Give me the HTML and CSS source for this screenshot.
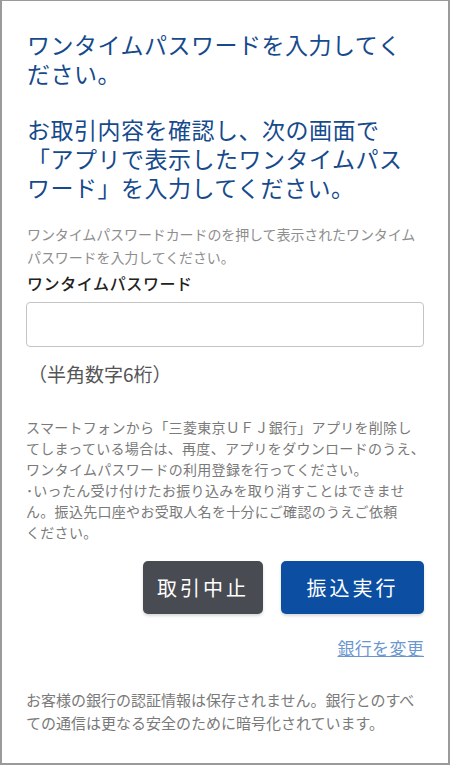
FILE: index.html
```html
<!DOCTYPE html>
<html lang="ja">
<head>
<meta charset="utf-8">
<title>ワンタイムパスワード</title>
<link rel="stylesheet" href="styles.css">
</head>
<body>
<div class="frame">
  <h1 class="title"><span class="line">ワンタイムパスワードを入力してく</span><span class="line">ださい。</span></h1>
  <h2 class="title second"><span class="line">お取引内容を確認し、次の画面で</span><span class="line">「アプリで表示したワンタイムパス</span><span class="line">ワード」を入力してください。</span></h2>
  <p class="desc">ワンタイムパスワードカードのを押して表示されたワンタイム<br>パスワードを入力してください。</p>
  <label class="label" for="otp">ワンタイムパスワード</label>
  <input class="input" id="otp" type="text">
  <p class="hint">（半角数字6桁）</p>
  <p class="notice">スマートフォンから「三菱東京ＵＦＪ銀行」アプリを削除し<br>てしまっている場合は、再度、アプリをダウンロードのうえ、<br>ワンタイムパスワードの利用登録を行ってください。<br>･いったん受け付けたお振り込みを取り消すことはできませ<br>ん。振込先口座やお受取人名を十分にご確認のうえご依頼<br>ください。</p>
  <div class="actions">
    <button class="btn cancel" type="button">取引中止</button>
    <button class="btn submit" type="button">振込実行</button>
  </div>
  <div class="linkrow"><a class="link" href="#">銀行を変更</a></div>
  <p class="footer">お客様の銀行の認証情報は保存されません。銀行とのすべ<br>ての通信は更なる安全のために暗号化されています。</p>
</div>
</body>
</html>
```
FILE: styles.css
```css
html, body {
  margin: 0;
  padding: 0;
  background: #ffffff;
}
body {
  font-family: "Noto Sans CJK JP", "Noto Sans", sans-serif;
}
.frame {
  box-sizing: border-box;
  width: 450px;
  height: 765px;
  border: 2px solid #9a9a9a;
  border-top-width: 1px;
  padding: 0 24px 0 24px;
  overflow: hidden;
}
.title {
  margin: 29px 0 0 1px;
  font-size: 23px;
  line-height: 29px;
  font-weight: 400;
  letter-spacing: 0.5px;
  color: #164a8c;
  white-space: nowrap;
}
.line {
  display: block;
  height: 29px;
}
.second {
  margin-top: 27px;
}
.desc {
  margin: 21px 0 0 1px;
  font-size: 14px;
  line-height: 23px;
  color: #8e8e8e;
  white-space: nowrap;
  letter-spacing: -0.1px;
}
.label {
  display: block;
  margin: 3px 0 0 1px;
  font-size: 16px;
  line-height: 22px;
  letter-spacing: 0.6px;
  color: #222222;
  font-weight: 500;
}
.input {
  display: block;
  box-sizing: border-box;
  width: 398px;
  height: 45px;
  margin: 8px 0 0 0;
  border: 1px solid #c4c4c4;
  border-radius: 4px;
  background: #fff;
  font-size: 16px;
}
.hint {
  margin: 13px 0 0 2px;
  font-size: 19px;
  line-height: 28px;
  color: #555555;
}
.notice {
  margin: 29px 0 0 0;
  font-size: 14px;
  line-height: 21px;
  letter-spacing: 0.3px;
  color: #7a7a7a;
  white-space: nowrap;
}
.actions {
  display: flex;
  justify-content: flex-end;
  gap: 18px;
  margin-top: 18px;
}
.btn {
  height: 53px;
  border: none;
  border-radius: 5px;
  font-family: "Noto Sans CJK JP", "Noto Sans", sans-serif;
  font-size: 20px;
  letter-spacing: 3px;
  color: #ffffff;
  padding: 0;
  box-shadow: 0 2px 3px rgba(0, 0, 0, 0.15);
}
.cancel {
  width: 120px;
  background: #484b52;
}
.submit {
  width: 143px;
  background: #0b4ea2;
}
.linkrow {
  display: flex;
  justify-content: flex-end;
  margin-top: 22px;
}
.link {
  font-size: 17px;
  line-height: 24px;
  color: #6b97cf;
  text-decoration: underline;
  letter-spacing: 0.3px;
}
.footer {
  margin: 28px 0 0 0;
  font-size: 15px;
  line-height: 23px;
  color: #7a7a7a;
  white-space: nowrap;
}
```
